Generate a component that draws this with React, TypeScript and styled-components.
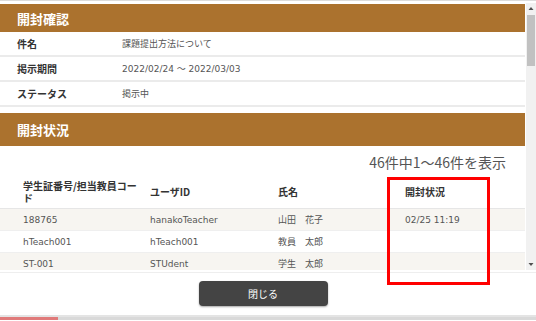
import styled, { createGlobalStyle } from 'styled-components'

const GlobalStyle = createGlobalStyle`
  html, body {
    margin: 0;
    padding: 0;
    background: #fff;
  }
  body {
    font-family: 'DejaVu Sans', 'Noto Sans CJK JP', sans-serif;
  }
`

const info = [
  { label: '件名', value: '課題提出方法について' },
  { label: '掲示期間', value: '2022/02/24 ～ 2022/03/03' },
  { label: 'ステータス', value: '掲示中' },
]

const rows = [
  { code: '188765', user: 'hanakoTeacher', name: '山田　花子', opened: '02/25 11:19' },
  { code: 'hTeach001', user: 'hTeach001', name: '教員　太郎', opened: '' },
  { code: 'ST-001', user: 'STUdent', name: '学生　太郎', opened: '' },
]

export default function App() {
  return (
    <Frame>
      <GlobalStyle />
      <TopEdge />
      <Scroller>
        <Body>
          <SectionHead $height={28}>開封確認</SectionHead>
          {info.map((item) => (
            <InfoRow key={item.label}>
              <InfoLabel>{item.label}</InfoLabel>
              <InfoValue>{item.value}</InfoValue>
            </InfoRow>
          ))}
          <SectionHead $height={33} $gap={6}>開封状況</SectionHead>
          <Count>46件中1～46件を表示</Count>
          <TableHead>
            <HeadCell>学生証番号/担当教員コード</HeadCell>
            <HeadCell>ユーザID</HeadCell>
            <HeadCell>氏名</HeadCell>
            <HeadCell>開封状況</HeadCell>
          </TableHead>
          {rows.map((r, i) => (
            <DataRow key={r.code} $striped={i % 2 === 0}>
              <Cell>{r.code}</Cell>
              <Cell>{r.user}</Cell>
              <Cell>{r.name}</Cell>
              <Cell>{r.opened}</Cell>
            </DataRow>
          ))}
        </Body>
        <ScrollBar>
          <Arrow viewBox="0 0 10 10">
            <path d="M2.5 6.5 L5 3.5 L7.5 6.5 Z" fill="#505050" />
          </Arrow>
          <Thumb />
          <Track />
          <Arrow viewBox="0 0 10 10">
            <path d="M2.5 3.5 L5 6.5 L7.5 3.5 Z" fill="#505050" />
          </Arrow>
        </ScrollBar>
      </Scroller>
      <Footer>
        <CloseButton>閉じる</CloseButton>
      </Footer>
      <BottomBar>
        <BottomProgress />
      </BottomBar>
      <Highlight />
    </Frame>
  )
}

const Frame = styled.div`
  position: relative;
  width: 536px;
  height: 321px;
  overflow: hidden;
  background: #fff;
  display: flex;
  flex-direction: column;
`

const TopEdge = styled.div`
  height: 3px;
  box-sizing: border-box;
  border-top: 1px solid #dcdcdc;
  flex-shrink: 0;
`

const Scroller = styled.div`
  display: flex;
  height: 267px;
  flex-shrink: 0;
`

const Body = styled.div`
  flex: 1;
  overflow: hidden;
  padding-right: 1px;
`

const SectionHead = styled.div<{ $height: number; $gap?: number }>`
  height: ${(p) => p.$height}px;
  margin-top: ${(p) => p.$gap ?? 1}px;
  background: #ab722e;
  color: #fff;
  font-family: 'Noto Sans CJK JP', sans-serif;
  font-weight: 700;
  font-size: 13px;
  display: flex;
  align-items: center;
  padding-left: 17px;
`

const InfoRow = styled.div`
  height: 25px;
  box-sizing: border-box;
  border-bottom: 2px solid #ebebeb;
  display: grid;
  grid-template-columns: 105px 1fr;
  align-items: center;
  padding-left: 17px;
`

const InfoLabel = styled.div`
  font-family: 'Noto Sans CJK JP', sans-serif;
  font-weight: 700;
  font-size: 10px;
  color: #333;
`

const InfoValue = styled.div`
  font-size: 9px;
  color: #555;
`

const Count = styled.div`
  height: 30px;
  display: flex;
  align-items: center;
  justify-content: flex-end;
  padding-right: 19px;
  padding-top: 1px;
  box-sizing: border-box;
  font-family: 'Noto Sans CJK JP', sans-serif;
  font-size: 14px;
  color: #555;
`

const TableHead = styled.div`
  height: 33px;
  box-sizing: border-box;
  border-bottom: 1px solid #e6e6e6;
  display: grid;
  grid-template-columns: 127px 128px 127px 1fr;
  align-items: center;
  padding-left: 23px;
`

const HeadCell = styled.div`
  font-family: 'Noto Sans CJK JP', sans-serif;
  font-weight: 700;
  font-size: 10px;
  line-height: 12px;
  color: #333;
  padding-right: 8px;
`

const DataRow = styled.div<{ $striped: boolean }>`
  height: 22px;
  box-sizing: border-box;
  background: ${(p) => (p.$striped ? '#f7f5f1' : '#fff')};
  border-bottom: 1px solid #efefef;
  display: grid;
  grid-template-columns: 127px 128px 127px 1fr;
  align-items: center;
  padding-left: 23px;
`

const Cell = styled.div`
  font-size: 9px;
  color: #555;
  white-space: nowrap;
`

const ScrollBar = styled.div`
  width: 10px;
  flex-shrink: 0;
  background: #f1f1f1;
  display: flex;
  flex-direction: column;
  align-items: center;
`

const Arrow = styled.svg`
  width: 10px;
  height: 11px;
  flex-shrink: 0;
`

const Thumb = styled.div`
  width: 8px;
  height: 51px;
  background: #c1c1c1;
  margin-top: 1px;
`

const Track = styled.div`
  flex: 1;
`

const Footer = styled.div`
  margin-top: 2px;
  border-top: 1px solid #eeeeee;
  height: 43px;
  box-sizing: border-box;
  display: flex;
  justify-content: center;
  align-items: flex-start;
  padding-top: 8px;
  padding-right: 10px;
  flex-shrink: 0;
`

const CloseButton = styled.button`
  width: 129px;
  height: 25px;
  border: none;
  border-radius: 4px;
  background: #444444;
  color: #fff;
  font-family: 'Noto Sans CJK JP', sans-serif;
  font-size: 10px;
  box-shadow: 0 1px 2px rgba(0, 0, 0, 0.35);
  cursor: pointer;
`

const BottomBar = styled.div`
  height: 5px;
  box-sizing: border-box;
  border-top: 2px solid #e4e4e4;
  background: #d9d9d9;
  flex-shrink: 0;
`

const BottomProgress = styled.div`
  width: 58px;
  height: 100%;
  background: #e07a7a;
`

const Highlight = styled.div`
  position: absolute;
  left: 387px;
  top: 177px;
  width: 103px;
  height: 108px;
  box-sizing: border-box;
  border: 3px solid #f00;
  pointer-events: none;
`
